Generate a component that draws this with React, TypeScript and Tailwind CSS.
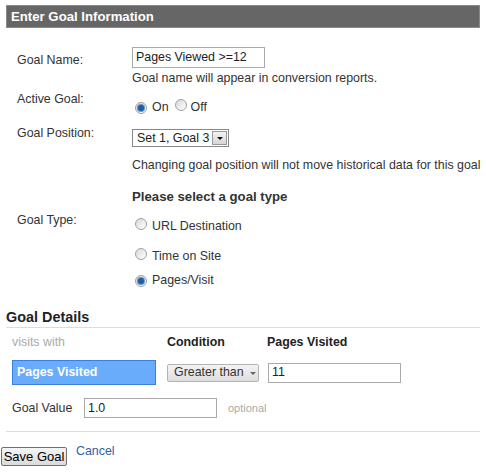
import React from "react";

// Radio in the old Windows style: grey ring, blue dot when picked
function Radio({ checked }: { checked?: boolean }) {
  return (
    <span className="inline-flex h-[12px] w-[12px] shrink-0 items-center justify-center rounded-full border border-[#a0a0a0] bg-gradient-to-br from-[#d8d8d8] to-[#ffffff]">
      {checked && (
        <span className="h-[6px] w-[6px] rounded-full bg-[#1f5f9e] shadow-[0_0_0_1px_#5c95cc]" />
      )}
    </span>
  );
}

function Label({ children, className = "" }: { children?: React.ReactNode; className?: string }) {
  return <div className={`w-[115px] shrink-0 leading-[14px] ${className}`}>{children}</div>;
}

export default function App() {
  return (
    <div className="w-[486px] bg-white pb-[8px] font-['Liberation_Sans',Arial,sans-serif] text-[12.4px] text-[#333]">
      {/* Header bar */}
      <div className="px-[6px] pt-[5px]">
        <div className="flex h-[23px] items-center border border-[#8a8a8a] bg-[#666666] pl-[4px] text-[13.2px] font-bold text-white">
          Enter Goal Information
        </div>
      </div>

      <div className="pl-[17px]">
        {/* Goal name */}
        <div className="mt-[19px] flex">
          <Label className="pt-[6px]">Goal Name:</Label>
          <div>
            <div className="flex h-[21px] w-[133px] items-center border border-[#aaa] px-[3px] text-[#222]">
              Pages Viewed &gt;=12
            </div>
            <div className="mt-[3px] leading-[14px]">Goal name will appear in conversion reports.</div>
          </div>
        </div>

        {/* Active goal */}
        <div className="mt-[7px] flex">
          <Label>Active Goal:</Label>
          <div className="flex items-center pt-[7px] leading-[14px]">
            <span className="ml-[3px]">
              <Radio checked />
            </span>
            <span className="ml-[5px]">On</span>
            <span className="ml-[6px]">
              <Radio />
            </span>
            <span className="ml-[4px]">Off</span>
          </div>
        </div>

        {/* Goal position */}
        <div className="mt-[12px] flex">
          <Label>Goal Position:</Label>
          <div className="pt-[3px]">
            <div className="flex h-[18px] w-[97px] items-center justify-between border border-[#888] pl-[4px] pr-[1px] text-[#222]">
              <span>Set 1, Goal 3</span>
              <span className="flex h-[14px] w-[15px] items-center justify-center border border-[#999] bg-gradient-to-b from-[#f4f4f4] to-[#d6d6d6]">
                <span className="h-0 w-0 border-x-[3px] border-t-[3px] border-x-transparent border-t-[#111]" />
              </span>
            </div>
            <div className="mt-[11px] whitespace-nowrap leading-[14px]">
              Changing goal position will not move historical data for this goal
            </div>
          </div>
        </div>

        {/* Goal type */}
        <div className="mt-[17px] flex">
          <Label />
          <div className="text-[13.2px] font-bold leading-[16px]">Please select a goal type</div>
        </div>
        <div className="mt-[8px] flex">
          <Label>Goal Type:</Label>
          <div className="pt-[5px] leading-[14px]">
            <div className="flex items-center">
              <span className="ml-[3px]">
                <Radio />
              </span>
              <span className="ml-[5px]">URL Destination</span>
            </div>
            <div className="mt-[15px] flex items-center">
              <span className="ml-[3px]">
                <Radio />
              </span>
              <span className="ml-[5px]">Time on Site</span>
            </div>
            <div className="mt-[10px] flex items-center">
              <span className="ml-[3px]">
                <Radio checked />
              </span>
              <span className="ml-[5px]">Pages/Visit</span>
            </div>
          </div>
        </div>
      </div>

      {/* Goal details */}
      <div className="mx-[6px] mt-[22px] border-b border-[#dcdcdc] pb-[2px] text-[14.4px] font-bold leading-[16px] text-[#222]">
        Goal Details
      </div>

      <div className="pl-[12px]">
        <div className="mt-[7px] flex leading-[14px]">
          <div className="w-[155px] text-[#aaa]">visits with</div>
          <div className="w-[100px] font-bold text-[#222]">Condition</div>
          <div className="font-bold text-[#222]">Pages Visited</div>
        </div>

        <div className="mt-[11px] flex h-[25px] items-center">
          <div className="flex h-[25px] w-[144px] items-center border border-[#3d7fe0] bg-[#6aacfc] pl-[4px] font-bold text-white">
            Pages Visited
          </div>
          <div className="ml-[11px] flex h-[18px] w-[92px] items-center rounded-[2px] border border-[#b4b4b4] bg-gradient-to-b from-[#f3f3f3] to-[#dedede] pl-[6px] text-[#333]">
            Greater than
            <span className="ml-[6px] mt-[2px] h-0 w-0 border-x-[3px] border-t-[3px] border-x-transparent border-t-[#666]" />
          </div>
          <div className="ml-[9px] flex h-[20px] w-[133px] items-center border border-[#aaa] px-[3px] text-[#222]">
            11
          </div>
        </div>

        <div className="mt-[13px] flex h-[20px] items-center">
          <div className="w-[72px]">Goal Value</div>
          <div className="flex h-[20px] w-[133px] items-center border border-[#aaa] px-[3px] text-[#222]">
            1.0
          </div>
          <div className="ml-[11px] text-[11px] text-[#aaa]">optional</div>
        </div>
      </div>

      <div className="mx-[6px] mt-[13px] border-b border-[#dcdcdc]" />

      <div className="mt-[12px] flex items-start pl-[1px]">
        <button className="mt-[3px] flex h-[19px] w-[66px] items-center justify-center rounded-[2px] border border-[#707070] bg-gradient-to-b from-[#f6f6f6] to-[#dadada] text-[13px] text-black">
          Save Goal
        </button>
        <a className="ml-[9px] leading-[14px] text-[#2f62a8]" href="#">
          Cancel
        </a>
      </div>
    </div>
  );
}
